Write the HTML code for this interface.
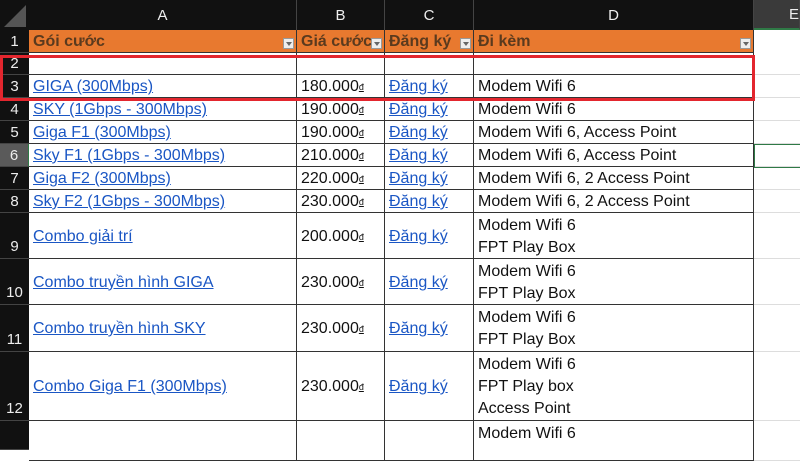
<!DOCTYPE html>
<html><head><meta charset="utf-8"><style>
*{margin:0;padding:0;box-sizing:border-box}
body{width:800px;height:450px;overflow:hidden;background:#fff;font-family:"Liberation Sans",Arial,sans-serif;position:relative}
.a{position:absolute}
.ch{background:#111;color:#eee;font-size:15px;display:flex;align-items:center;justify-content:center;top:0;height:30px;border-right:1px solid #444}
.rh{background:#111;color:#eee;font-size:15px;left:0;width:29px;display:flex;justify-content:center;align-items:center;border-bottom:1px solid #444}
.rh.t{align-items:flex-end;padding-bottom:3px}
.c{font-size:16px;display:flex;align-items:center;padding-left:4px;padding-top:2px;border-right:1px solid #333;border-bottom:1px solid #333;line-height:22px;color:#111;white-space:nowrap}
.l{color:#1a56c4;text-decoration:underline}
.h{background:#e8792f;color:#5a3a1e;font-weight:bold;position:absolute;font-size:16px}
.dd{position:absolute;right:2px;bottom:3px;width:11px;height:11px;background:#eee;border:1px solid #999}
.dd:after{content:"";position:absolute;left:2px;top:3px;border-left:3px solid transparent;border-right:3px solid transparent;border-top:4px solid #666}
.g{position:absolute;left:754px;width:46px;border-bottom:1px solid #ddd}
</style></head><body>
<div class="a" style="left:0;top:0;width:29px;height:30px;background:#111"><div style="position:absolute;right:3px;bottom:3px;width:0;height:0;border-left:22px solid transparent;border-bottom:22px solid #555"></div></div>
<div class="a ch" style="left:29px;width:268px">A</div>
<div class="a ch" style="left:297px;width:88px">B</div>
<div class="a ch" style="left:385px;width:89px">C</div>
<div class="a ch" style="left:474px;width:280px">D</div>
<div class="a ch" style="left:754px;width:46px;background:#3a3a3a;justify-content:flex-end;border-bottom:2px solid #2f7a46">E</div>

<div class="a rh" style="top:30px;height:23px">1</div>
<div class="a rh" style="top:53px;height:22px">2</div>
<div class="a rh" style="top:75px;height:23px">3</div>
<div class="a rh" style="top:98px;height:23px">4</div>
<div class="a rh" style="top:121px;height:23px">5</div>
<div class="a rh" style="top:144px;height:23px;background:#5a5a5a;border-right:1px solid #2f7a46">6</div>
<div class="a rh" style="top:167px;height:23px">7</div>
<div class="a rh" style="top:190px;height:23px">8</div>
<div class="a rh t" style="top:213px;height:46px">9</div>
<div class="a rh t" style="top:259px;height:46px">10</div>
<div class="a rh t" style="top:305px;height:47px">11</div>
<div class="a rh t" style="top:352px;height:69px">12</div>
<div class="a rh" style="top:421px;height:29px"></div>

<div class="c h" style="left:29px;top:30px;width:268px;height:23px">Gói cước<span class="dd"></span></div>
<div class="c h" style="left:297px;top:30px;width:88px;height:23px">Giá cước<span class="dd"></span></div>
<div class="c h" style="left:385px;top:30px;width:89px;height:23px">Đăng ký<span class="dd"></span></div>
<div class="c h" style="left:474px;top:30px;width:280px;height:23px">Đi kèm<span class="dd"></span></div>

<div id="rows"></div>
<script>
var R=[[53,22,"","","",""],[75,23,"GIGA (300Mbps)","180.000","Đăng ký","Modem Wifi 6"],[98,23,"SKY (1Gbps - 300Mbps)","190.000","Đăng ký","Modem Wifi 6"],[121,23,"Giga F1 (300Mbps)","190.000","Đăng ký","Modem Wifi 6, Access Point"],[144,23,"Sky F1 (1Gbps - 300Mbps)","210.000","Đăng ký","Modem Wifi 6, Access Point"],[167,23,"Giga F2 (300Mbps)","220.000","Đăng ký","Modem Wifi 6, 2 Access Point"],[190,23,"Sky F2 (1Gbps - 300Mbps)","230.000","Đăng ký","Modem Wifi 6, 2 Access Point"],[213,46,"Combo giải trí","200.000","Đăng ký","Modem Wifi 6<br>FPT Play Box"],[259,46,"Combo truyền hình GIGA","230.000","Đăng ký","Modem Wifi 6<br>FPT Play Box"],[305,47,"Combo truyền hình SKY","230.000","Đăng ký","Modem Wifi 6<br>FPT Play Box"],[352,69,"Combo Giga F1 (300Mbps)","230.000","Đăng ký","Modem Wifi 6<br>FPT Play box<br>Access Point"],[421,40,"","","","<span style='align-self:flex-start;margin-top:0px'>Modem Wifi 6</span>"]];
var h="";R.forEach(function(r){var t=r[0],H=r[1];
h+='<div class="a c" style="left:29px;top:'+t+'px;width:268px;height:'+H+'px"><span class="l">'+r[2]+'</span></div>';
h+='<div class="a c" style="left:297px;top:'+t+'px;width:88px;height:'+H+'px">'+(r[3]?r[3]+'<sup style="font-size:9px;text-decoration:underline;vertical-align:6px">đ</sup>':'')+'</div>';
h+='<div class="a c" style="left:385px;top:'+t+'px;width:89px;height:'+H+'px"><span class="l">'+r[4]+'</span></div>';
h+='<div class="a c" style="left:474px;top:'+t+'px;width:280px;height:'+H+'px;align-items:'+(t==421?'flex-start':'center')+'"><div>'+r[5]+'</div></div>';
h+='<div class="g" style="top:'+t+'px;height:'+H+'px"></div>';});
document.getElementById("rows").innerHTML=h;
</script>
<div class="a" style="left:754px;top:144px;width:46px;height:24px;border:1px solid #2f7a46;border-right:none"></div>
<div class="a" style="left:0;top:55px;width:755px;height:46px;border:3px solid #e3262e"></div>
</body></html>
